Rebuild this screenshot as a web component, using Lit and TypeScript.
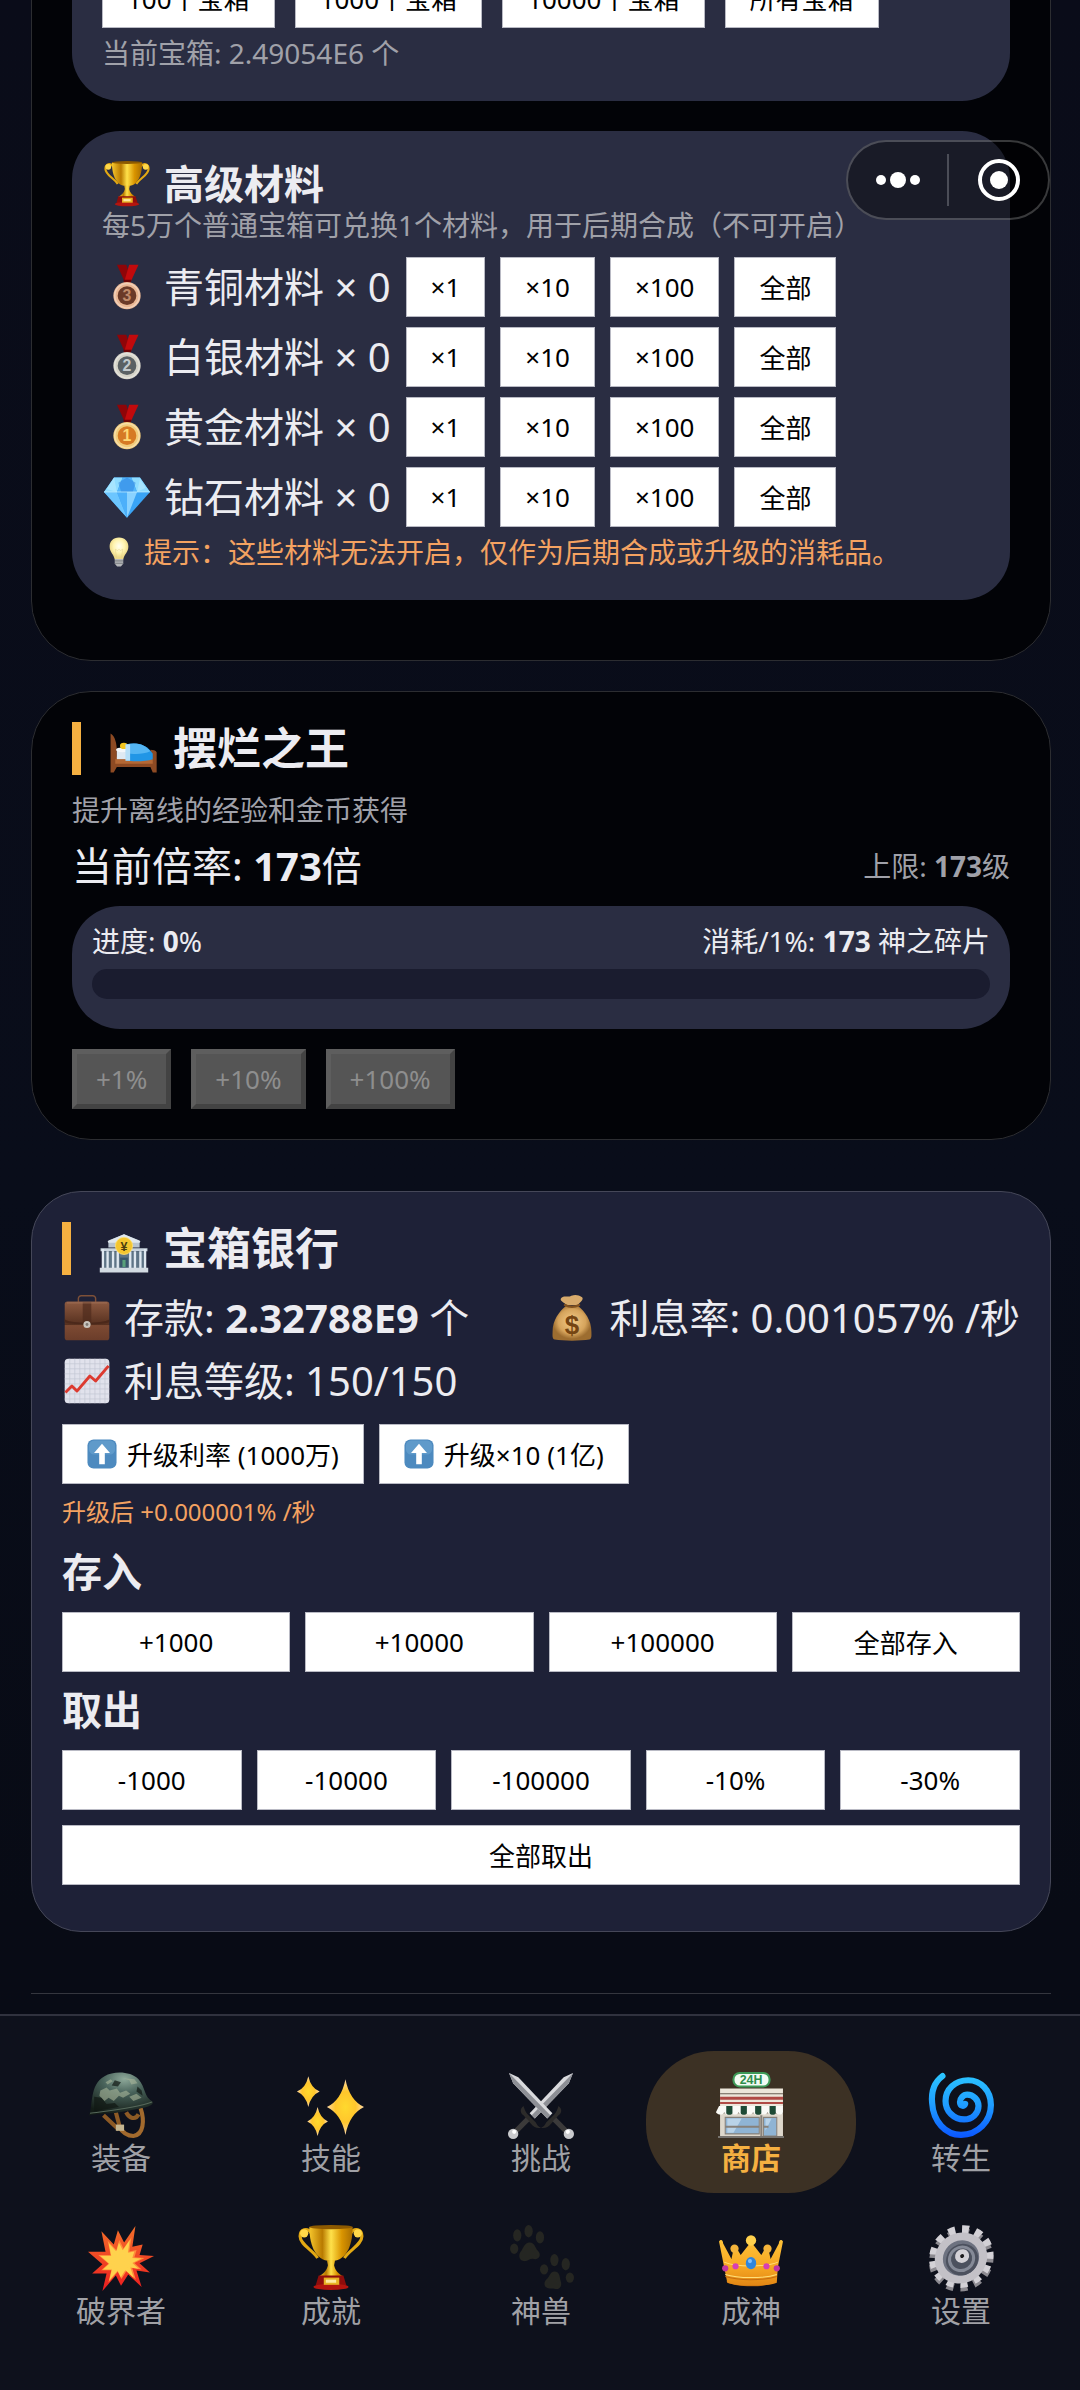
import {LitElement, css, html, svg, nothing, TemplateResult} from 'lit';
import {customElement, property, state} from 'lit/decorators.js';
import {classMap} from 'lit/directives/class-map.js';
import {styleMap} from 'lit/directives/style-map.js';

const star = (x: number, y: number, rx: number, ry: number) => svg`
  <path fill="url(#spark)" d="M${x} ${y - ry} Q${x + rx * 0.22} ${y - ry * 0.25} ${x + rx} ${y} Q${x + rx * 0.22} ${y + ry * 0.25} ${x} ${y + ry} Q${x - rx * 0.22} ${y + ry * 0.25} ${x - rx} ${y} Q${x - rx * 0.22} ${y - ry * 0.25} ${x} ${y - ry}Z"/>`;

const medal = (num: string, rim: string, face: string, ink: string) => svg`
  <path fill="#8e0508" d="M18 1h13l7 21-9 3z"/>
  <path fill="#c20a0c" d="M35 1h13L37 25h-9z"/>
  <path fill="#6d0306" d="M27 22h11l-1 5h-9z"/>
  <circle cx="32" cy="44" r="19" fill=${rim}/>
  <circle cx="32" cy="44" r="17" fill="none" stroke="#fff" stroke-opacity=".35" stroke-width="2"/>
  <circle cx="32" cy="44" r="13" fill=${face}/>
  <text x="32" y="52" text-anchor="middle" font-family="Liberation Sans, sans-serif" font-weight="700" font-size="22" fill=${ink}>${num}</text>`;

const sword = svg`
  <path fill="#d9dadd" d="M1 1l9 4 33 35-5 5L5 11z"/>
  <path fill="#8d8f95" d="M1 1l40 41-3 3L5 11z"/>
  <path fill="#2c2b2a" d="M49 33c4 3 3 7 0 9l-7 8c-3 4-7 5-10 4 3-1 4-3 5-5l8-8c2-2 3-5 4-8z"/>
  <path stroke="#3b3a3a" stroke-width="5" d="M45 46l12 12"/>
  <circle cx="59" cy="60" r="5" fill="#c9cacd"/>
  <circle cx="58" cy="58" r="2" fill="#fff"/>`;

const burst = '46,1 43,21 53,19 50,29 64,30 50,37 60,46 47,44 52,60 39,48 32,59 27,49 14,64 18,47 4,47 14,38 0,26 17,26 13,6 25,19 29,5 35,17';

const ICONS: Record<string, TemplateResult> = {
  trophy: svg`
    <defs>
      <linearGradient id="gold"><stop offset="0" stop-color="#f6c62c"/><stop offset=".3" stop-color="#b97a00"/><stop offset=".5" stop-color="#ffe14a"/><stop offset=".75" stop-color="#d99400"/><stop offset="1" stop-color="#a86d00"/></linearGradient>
    </defs>
    <path fill="none" stroke="#e3a913" stroke-width="3" d="M13 8C9 2 2 4 2 11c0 8 12 13 17 21M51 8c4-6 11-4 11 3 0 8-12 13-17 21"/>
    <circle cx="6" cy="8" r="4" fill="#ffd84a"/><circle cx="58" cy="8" r="4" fill="#ffd84a"/>
    <path fill="url(#gold)" d="M11 2h42c0 14-4 33-21 33S11 16 11 2z"/>
    <ellipse cx="32" cy="2" rx="21" ry="2" fill="#8d5a00"/>
    <path fill="url(#gold)" d="M28 34h8l-1 5c1 5 4 8 9 11H20c5-3 8-6 9-11z"/>
    <path fill="#8f0d0b" d="M20 49h24l3 10H17z"/>
    <ellipse cx="32" cy="60" rx="17" ry="3" fill="#b3150f"/>
    <path fill="#e8b324" d="M25 51h15v7H25z"/>
    <path fill="#ffe9a0" d="M27 53h10v3H27z"/>`,
  bronze: medal('3', '#eab794', '#6b3a28', '#c08a6a'),
  silver: medal('2', '#d5d3c8', '#5b6164', '#c3c9cc'),
  gold: medal('1', '#f2cc7a', '#d67a24', '#ffd873'),
  diamond: svg`
    <path fill="#3aa4f5" d="M14 5h36l14 20-32 36L0 25z"/>
    <path fill="#8fdcff" d="M14 5h12l-8 20H0zM38 5h12l14 20H46z"/>
    <path fill="#55b6fb" d="M26 5h12l8 20H18z"/>
    <path fill="#2b7fe0" d="M20 12l12-7 12 7-4 13H24z" opacity=".5"/>
    <path fill="#6cc6ff" d="M0 25h18l14 36z"/>
    <path fill="#4db0fa" d="M18 25h14v36z"/>
    <path fill="#8ad2ff" d="M32 25h14L32 61z"/>
    <path fill="#b8ebff" d="M4 21L14 5l4 20zM46 25l4-18 8 12z" opacity=".6"/>
    <path fill="none" stroke="#c6efff" stroke-width="1" d="M0 25h64"/>`,
  bulb: svg`
    <defs><radialGradient id="glow" cy=".4"><stop offset="0" stop-color="#fffef0"/><stop offset=".6" stop-color="#fff4b0"/><stop offset="1" stop-color="#ecd98a"/></radialGradient></defs>
    <path fill="url(#glow)" d="M32 1c13 0 20 9 20 19 0 13-9 16-11 28H23C21 36 12 33 12 20 12 10 19 1 32 1z"/>
    <path fill="none" stroke="#e3d08a" stroke-width="1" d="M27 46l-3-20 5 3 3-3 3 3 5-3-3 20"/>
    <path fill="#b5b7ba" d="M23 47h18v10l-5 6h-8l-5-6z"/>
    <path stroke="#74777b" stroke-width="2" d="M23 51h18M23 56h18"/>`,
  bed: svg`
    <path fill="#8d4a23" d="M2 12c6 3 8 14 8 22v8h43V33c3 0 7 1 8 3v26h-5l-3-7H10l-4 7H2z"/>
    <path fill="#b46835" d="M8 45h48v6H8z"/>
    <path fill="#dfe9f2" d="M10 33h16v12H10z"/>
    <ellipse cx="17" cy="33" rx="8" ry="3" fill="#f4f7fa"/>
    <ellipse cx="19" cy="28" rx="5" ry="4" fill="#f2c41d"/>
    <path fill="#2196e6" d="M22 26c14-3 26 0 34 12v7c-8 3-24 3-34 2z"/>
    <path fill="#54b5f3" d="M22 26c14-3 24 0 31 9-9 4-22 4-31 2z"/>
    <path fill="#b7dff7" d="M21 26h6v21h-6z"/>`,
  bank: svg`
    <path fill="#b8c4cf" d="M12 30V21l20-8 20 8v9z"/>
    <path fill="#dfe7ee" d="M11 22l21-9 21 9-1 2H12z"/>
    <path fill="#c9d4de" d="M2 31h60v4H2z"/>
    <path fill="#5e7486" d="M4 35h56v22H4z"/>
    <path stroke="#dfe8f0" stroke-width="3" d="M5 32v26M11 35v22M18 35v22M24 35v22M40 35v22M46 35v22M53 35v22M59 32v26"/>
    <path fill="#39566b" d="M27 43h10v14H27z"/>
    <path fill="#58a07a" d="M30 46h4v9h-4z"/>
    <path fill="#d3dbe2" d="M1 56h62v6H1z"/>
    <circle cx="32" cy="28" r="11" fill="#f3c52f" stroke="#ffe27a" stroke-width="1"/>
    <text x="32" y="34" text-anchor="middle" font-family="Liberation Sans, sans-serif" font-weight="700" font-size="16" fill="#4b3c10">¥</text>`,
  briefcase: svg`
    <defs><linearGradient id="leather" x2="0" y2="1"><stop offset="0" stop-color="#8d5a41"/><stop offset=".6" stop-color="#56301f"/><stop offset=".62" stop-color="#7d4a33"/><stop offset="1" stop-color="#6b3d2a"/></linearGradient></defs>
    <path fill="none" stroke="#7d5038" stroke-width="2" d="M20 10V5c0-2 2-4 4-4h16c2 0 4 2 4 4v5"/>
    <rect x="1" y="9" width="62" height="54" rx="4" fill="url(#leather)"/>
    <path fill="#4b281a" d="M1 34c10 6 52 6 62 0v4c-10 4-52 4-62 0z"/>
    <path fill="#4f2b1d" d="M26 10h12v30H26z" opacity=".7"/>
    <path stroke="#a8785f" stroke-width="1" d="M4 11h56"/>
    <circle cx="32" cy="41" r="5" fill="#c9c4bd"/><circle cx="32" cy="41" r="2" fill="#7d7872"/>`,
  chart: svg`
    <rect x="1" y="1" width="62" height="62" rx="5" fill="#e1e2ec"/>
    <path stroke="#c3c7d4" stroke-width="1" d="M8 1v62M15 1v62M22 1v62M29 1v62M36 1v62M43 1v62M50 1v62M57 1v62M1 8h62M1 15h62M1 22h62M1 29h62M1 36h62M1 43h62M1 50h62M1 57h62"/>
    <path fill="none" stroke="#dc3a30" stroke-width="4" stroke-linejoin="round" d="M2 48l9-9 7 7 18-21 8 7 18-21"/>`,
  moneybag: svg`
    <defs><radialGradient id="sack" cy=".45"><stop offset="0" stop-color="#f3cb88"/><stop offset=".7" stop-color="#d6a45c"/><stop offset="1" stop-color="#9d6d30"/></radialGradient></defs>
    <path fill="#d8ab6c" d="M17 4c5-4 9 0 14-3 6-2 10-1 15 2 3 3-3 7-6 11H25c-4-4-11-6-8-10z"/>
    <path fill="url(#sack)" d="M24 15h16c10 8 19 20 19 36 0 4 1 10-3 11-12 2-36 2-48 0-4-1-3-7-3-11 0-16 9-28 19-36z"/>
    <path stroke="#80511f" stroke-width="3" stroke-linecap="round" d="M22 14c6 3 14 3 20 0" fill="none"/>
    <text x="32" y="54" text-anchor="middle" font-family="Liberation Sans, sans-serif" font-weight="700" font-size="36" fill="#754512">$</text>`,
  up: svg`
    <rect x="1" y="1" width="62" height="62" rx="13" fill="#4d8abf"/>
    <rect x="4" y="3" width="56" height="30" rx="11" fill="#72a9d6" opacity=".5"/>
    <path fill="#fff" d="M32 10l17 20H38v24H26V30H15z"/>`,
  helmet: svg`
    <defs><radialGradient id="dome" cx=".55" cy=".15" r=".85"><stop offset="0" stop-color="#8ea99a"/><stop offset=".4" stop-color="#48625a"/><stop offset="1" stop-color="#131c17"/></radialGradient></defs>
    <path fill="none" stroke="#8d5a25" stroke-width="4" d="M15 42l15 14M27 39l4 15M37 39c3 6 9 8 12 2"/>
    <path fill="none" stroke="#a26a2d" stroke-width="4" d="M51 35c4 12 3 26-7 27-7 0-11-4-14-9"/>
    <path fill="#c5b690" d="M27 51h8v6h-8z"/>
    <path fill="url(#dome)" d="M1 42C5 34 1 12 16 4c9-5 25-5 33 3 7 8 5 17 14 22 0 5-12 6-27 9-14 3-26 2-35 4z"/>
    <path fill="#a9b59a" opacity=".6" d="M12 18l6-3 3 3 7-2 3 4 6-2 4 3-7 4-4-2-5 5-5-3-4 3-5-5zM34 6l6 2 2 4 6-1-3-4zM40 24l7-3 5 4-8 3zM17 10l5-3 2 2-5 3z"/>
    <path fill="#0f1712" opacity=".7" d="M6 24l7 1 5 6 8-1 4 4-24 4zM26 8l6 2-3 4-6-1zM48 14l4 4 1 5-6-4z"/>
    <path fill="none" stroke="#56685a" stroke-width="1" d="M2 40c14-2 45-5 60-11"/>`,
  sparkles: svg`
    <defs><radialGradient id="spark"><stop offset="0" stop-color="#ffd92e"/><stop offset=".55" stop-color="#ffc62c"/><stop offset="1" stop-color="#ffd9a8"/></radialGradient></defs>
    ${star(10, 19, 11, 15)}${star(46, 34, 18, 27)}${star(19, 48, 10, 14)}`,
  swords: svg`<g transform="matrix(-1 0 0 1 64 0)">${sword}</g>${sword}`,
  store: svg`
    <rect x="15" y="1" width="35" height="13" rx="6" fill="#f2fbf4" stroke="#3e9a58" stroke-width="2"/>
    <text x="32" y="12" text-anchor="middle" font-family="Liberation Sans, sans-serif" font-weight="700" font-size="12" fill="#2f8d4b">24H</text>
    <path fill="#ece6da" d="M2 16h61v18H2z"/>
    <path stroke="#6a5f55" stroke-width="1" d="M2 21h61"/>
    <path fill="#b04a45" d="M2 24h61v3H2zM2 29h61v2H2z"/>
    <path fill="#ded8cc" d="M2 40h61v23H2z"/>
    <path fill="#fafaf6" d="M1 33h62v6c0 3-6 3-7 0-1 3-7 3-8 0-1 3-6 3-7 0-1 3-6 3-7 0-1 3-6 3-7 0-1 3-6 3-7 0-1 3-6 3-7 0-1 3-6 3-7 0-1 3-6 3-8 0z"/>
    <path fill="#1e4a35" d="M8 33h6v7c-1 2-5 2-6 0zM22 33h6v7c-1 2-5 2-6 0zM36 33h6v7c-1 2-5 2-6 0zM50 33h6v7c-1 2-5 2-6 0z"/>
    <path fill="#8fb4d4" stroke="#87817a" stroke-width="1" d="M7 44h33v16H7zM44 44h13v18H44z"/>
    <path fill="#b9d3e8" d="M9 45h14l-8 14H9zM46 45h6l-6 12z"/>
    <path stroke="#87817a" stroke-width="2" d="M7 53h33M44 53h5M42 42v21"/>
    <path fill="#77736e" d="M0 62h64v2H0z"/>`,
  spiral: svg`
    <defs><linearGradient id="wave" gradientUnits="userSpaceOnUse" x1="0" y1="0" x2="0" y2="64"><stop offset="0" stop-color="#2cc8ff"/><stop offset=".5" stop-color="#1f9dff"/><stop offset="1" stop-color="#0a55ff"/></linearGradient></defs>
    <path fill="none" stroke="url(#wave)" stroke-width="6" stroke-linecap="round" d="M14 4C6 10 3 19 4 30c1 18 13 31 28 31 16 0 29-13 29-29C61 18 51 8 39 8 26 8 17 17 17 28c0 10 8 18 18 18 8 0 14-6 14-13 0-6-5-11-11-11-4 0-7 4-7 7 0 4 4 5 5 2"/>`,
  boom: svg`
    <defs><linearGradient id="flame" x2="0" y2="1"><stop offset="0" stop-color="#f4702a"/><stop offset="1" stop-color="#ec1c1f"/></linearGradient></defs>
    <polygon fill="url(#flame)" points=${burst}/>
    <polygon fill="#ff8f3a" transform="translate(10 11) scale(.7)" points=${burst}/>
    <polygon fill="#ffd24d" transform="translate(12 14) scale(.62)" points=${burst}/>
    <circle cx="32" cy="34" r="10" fill="#ffd24d"/>`,
  paws: svg`
    <g fill="#252622">
      <ellipse cx="9" cy="10" rx="4" ry="6"/><ellipse cx="20" cy="6" rx="4" ry="6"/><ellipse cx="31" cy="12" rx="4" ry="6"/><ellipse cx="6" cy="23" rx="4" ry="5"/>
      <path d="M20 17c6-1 6 5 9 8 4 4 1 9-4 8-4-1-6 3-10 2-5-1-5-7-2-10 2-3 3-7 7-8z"/>
      <ellipse cx="35" cy="43" rx="4" ry="5"/><ellipse cx="45" cy="34" rx="4" ry="6"/><ellipse cx="56" cy="38" rx="4" ry="6"/><ellipse cx="60" cy="51" rx="4" ry="5"/>
      <path d="M45 45c5 0 5 5 6 9 2 5-1 9-5 8-3-1-5 0-8-1-4-2-3-7 0-9 3-3 3-7 7-7z"/>
    </g>`,
  crown: svg`
    <defs><linearGradient id="crown" x2="0" y2="1"><stop offset="0" stop-color="#ffc53a"/><stop offset=".6" stop-color="#f7a823"/><stop offset="1" stop-color="#e28614"/></linearGradient></defs>
    <path fill="#a85c0c" d="M8 55c10-4 38-4 48 0-10 6-38 6-48 0z"/>
    <path fill="url(#crown)" d="M1 16c2-3 4-1 4 2l8 15 2-9c-4-4 5-7 4 0l3 5 8-10c-5-9 9-9 4 0l8 10 3-5c-1-7 8-4 4 0l2 9 8-15c0-3 2-5 4-2l-5 25-1 15c-10 4-38 4-48 0L6 41z"/>
    <circle cx="32" cy="15" r="5" fill="#ffd14d"/><circle cx="16" cy="23" r="4" fill="#f5b53b"/><circle cx="48" cy="23" r="4" fill="#f5b53b"/>
    <path fill="none" stroke="#ffe07a" stroke-width="1" d="M7 48c12 4 38 4 50 0M6 36c12 5 40 5 52 0"/>
    <path fill="none" stroke="#c56c0f" stroke-width="1" d="M7 50c12 4 38 4 50 0"/>
    <ellipse cx="32" cy="37" rx="5" ry="6" fill="#2f86dd"/><circle cx="31" cy="35" r="2" fill="#7fc1ff"/>
    <circle cx="17" cy="40" r="3" fill="#d63fb4"/><circle cx="47" cy="40" r="3" fill="#d63fb4"/>
    <circle cx="7" cy="42" r="3" fill="#c2359f"/><circle cx="57" cy="42" r="3" fill="#c2359f"/>`,
  gear: svg`
    <g transform="rotate(-35 32 32) translate(32 32) scale(1 .93) translate(-32 -32)">
      <circle cx="31" cy="34" r="28" fill="none" stroke="#8d8b91" stroke-width="8" stroke-dasharray="7 7" pathLength="182"/>
      <circle cx="33" cy="31" r="28" fill="none" stroke="#d3d1d6" stroke-width="8" stroke-dasharray="7 7" pathLength="182"/>
      <circle cx="32" cy="32" r="26" fill="#c3c1c7"/>
      <circle cx="32" cy="32" r="18" fill="#6d7280"/>
      <circle cx="32" cy="34" r="16" fill="#4c515e"/>
      <circle cx="32" cy="33" r="12" fill="none" stroke="#858a97" stroke-width="3"/>
      <circle cx="34" cy="31" r="7" fill="#d4d2d7"/>
      <circle cx="34" cy="31" r="2" fill="#1b1a1c"/>
    </g>`,
};

const MATERIALS = [
  {icon: 'bronze', name: '青铜材料', count: 0},
  {icon: 'silver', name: '白银材料', count: 0},
  {icon: 'gold', name: '黄金材料', count: 0},
  {icon: 'diamond', name: '钻石材料', count: 0},
];

const TABS = [
  {icon: 'helmet', label: '装备'},
  {icon: 'sparkles', label: '技能'},
  {icon: 'swords', label: '挑战'},
  {icon: 'store', label: '商店'},
  {icon: 'spiral', label: '转生'},
  {icon: 'boom', label: '破界者'},
  {icon: 'trophy', label: '成就'},
  {icon: 'paws', label: '神兽'},
  {icon: 'crown', label: '成神'},
  {icon: 'gear', label: '设置'},
];

@customElement('emoji-icon')
export class EmojiIcon extends LitElement {
  @property({type: String}) name = '';

  static styles = css`
    :host {
      display: block;
      flex: none;
      width: 46px;
      height: 46px;
    }

    svg {
      display: block;
      width: 100%;
      height: 100%;
      overflow: visible;
    }
  `;

  render() {
    return html`<svg viewBox="0 0 64 64" aria-hidden="true">${ICONS[this.name]}</svg>`;
  }
}

@customElement('tab-bar')
export class TabBar extends LitElement {
  @state() active = '商店';

  static styles = css`
    :host {
      display: block;
      padding: 35px 14px 44px 16px;
      border-top: 2px solid #30323e;
      background: #0e111c;
    }

    nav {
      display: grid;
      grid-template-columns: repeat(5, 1fr);
      gap: 11px 0;
    }

    .tab {
      display: flex;
      flex-direction: column;
      align-items: center;
      padding: 21px 0 15px;
      border: 0;
      border-radius: 68px;
      background: none;
      color: #a0a1a6;
      font: inherit;
      font-size: 30px;
      line-height: 40px;
    }

    .tab emoji-icon {
      width: 66px;
      height: 66px;
    }

    .tab.active {
      background: #3c3124;
      color: #f5b041;
      font-weight: 700;
    }
  `;

  render() {
    return html`
      <nav>
        ${TABS.map(tab => html`
          <button
            class=${classMap({tab: true, active: tab.label === this.active})}
            aria-current=${tab.label === this.active ? 'page' : nothing}
            @click=${() => { this.active = tab.label; }}
          >
            <emoji-icon name=${tab.icon}></emoji-icon>
            <span>${tab.label}</span>
          </button>
        `)}
      </nav>
    `;
  }
}

@customElement('app-root')
export class AppRoot extends LitElement {
  @state() progress = 0;

  static styles = css`
    :host {
      display: flex;
      flex-direction: column;
      height: 100vh;
      background: linear-gradient(#0a0c19, #090d1a 50%, #080b15 80%);
      color: #ececf1;
      font-family: 'Noto Sans', 'Noto Sans CJK SC', sans-serif;
      font-size: 40px;
    }

    * {
      box-sizing: border-box;
    }

    h2, h3, p {
      margin: 0;
    }

    /* Scrolled to its end: the top of the list runs out of view. */
    main {
      flex: 1;
      min-height: 0;
      display: flex;
      flex-direction: column;
      justify-content: flex-end;
      overflow: hidden;
      padding: 0 29px 20px 31px;
    }

    main > * {
      flex: none;
    }

    .card {
      margin-bottom: 30px;
      padding: 30px 40px;
      border: 1px solid #2c2d31;
      border-radius: 60px;
      background: #020307;
    }

    .card.chests {
      padding-bottom: 60px;
    }

    .card.lazy {
      margin-bottom: 51px;
    }

    .card.bank {
      margin-bottom: 61px;
      padding: 30px 30px 46px;
      border-color: #454758;
      border-radius: 50px;
      background: #1e2137;
    }

    .panel {
      padding: 30px;
      border-radius: 48px;
      background: #2a2d42;
    }

    .panel + .panel {
      margin-top: 30px;
    }

    .title {
      display: flex;
      align-items: center;
      gap: 14px;
      padding-left: 28px;
      border-left: 9px solid #f5b041;
      font-size: 44px;
      line-height: 53px;
    }

    .title emoji-icon {
      width: 50px;
      height: 50px;
    }

    .line {
      display: flex;
      align-items: center;
      gap: 14px;
      padding-left: 2px;
    }

    h3 {
      font-size: 40px;
      line-height: 44px;
    }

    .muted {
      color: #a0a1a9;
      font-size: 28px;
      line-height: 36px;
    }

    .tip {
      gap: 10px;
      margin-top: 7px;
      color: #f4a261;
      font-size: 28px;
      line-height: 36px;
    }

    .tip emoji-icon {
      width: 30px;
      height: 30px;
    }

    .row {
      display: flex;
      gap: 15px;
    }

    .row.wide {
      gap: 20px;
    }

    .panel .muted {
      margin-top: 7px;
    }

    .panel h3 + .muted {
      margin: 0 0 14px;
    }

    .materials {
      display: grid;
      gap: 10px;
    }

    .materials .line {
      line-height: 60px;
    }

    .btn {
      display: flex;
      align-items: center;
      justify-content: center;
      gap: 10px;
      height: 60px;
      padding: 0 24px;
      border: 1px solid #b9bac4;
      border-radius: 0;
      background: #fff;
      color: #000;
      font: inherit;
      font-size: 26px;
      white-space: nowrap;
    }

    .btn emoji-icon {
      width: 30px;
      height: 30px;
    }

    .btn:disabled {
      padding: 0 19px;
      border: 5px solid;
      border-color: #5e5e5e #434343 #434343 #5e5e5e;
      background: #555;
      color: #8e8e8e;
    }

    .lazy .muted {
      margin-top: 17px;
    }

    .split {
      display: flex;
      align-items: center;
      justify-content: space-between;
    }

    .lazy .rate {
      margin-top: 12px;
      line-height: 52px;
    }

    .lazy .rate .muted {
      margin: 0;
    }

    .progress {
      margin: 14px 0 20px;
      padding: 17px 20px 30px;
      font-size: 28px;
      line-height: 36px;
    }

    .track {
      height: 30px;
      margin-top: 10px;
      overflow: hidden;
      border-radius: 15px;
      background: #1a1c2f;
    }

    .fill {
      height: 100%;
      background: #f5b041;
    }

    .stats {
      margin-top: 11px;
      line-height: 63px;
    }

    .bank .row {
      margin-top: 12px;
    }

    .hint {
      margin: 10px 0 16px;
      color: #f4a261;
      font-size: 24px;
      line-height: 36px;
    }

    .bank h3 {
      line-height: 52px;
    }

    .grid {
      display: grid;
      grid-auto-flow: column;
      grid-auto-columns: 1fr;
      gap: 15px;
      margin: 14px 0 12px;
    }

    .grid.withdraw {
      grid-auto-flow: row;
      grid-template-columns: repeat(5, 1fr);
      margin-bottom: 0;
    }

    .btn.full {
      grid-column: 1 / -1;
    }

    hr {
      width: 100%;
      height: 1px;
      margin: 0;
      border: 0;
      background: #34363e;
    }

    /* Floating mini-program menu. */
    .capsule {
      position: fixed;
      top: 140px;
      right: 30px;
      display: flex;
      align-items: center;
      width: 204px;
      height: 80px;
      border: 2px solid rgba(255, 255, 255, 0.22);
      border-radius: 40px;
      background: rgba(0, 0, 0, 0.4);
    }

    .capsule button {
      flex: 1;
      display: flex;
      align-items: center;
      justify-content: center;
      height: 52px;
      padding: 0;
      border: 0;
      background: none;
    }

    .capsule button + button {
      border-left: 2px solid rgba(255, 255, 255, 0.22);
    }

    .capsule svg {
      width: 44px;
      height: 44px;
      fill: #fff;
    }
  `;

  private buttons(labels: string[]) {
    return labels.map(label => html`<button class="btn">${label}</button>`);
  }

  private renderChests() {
    return html`
      <section class="card chests">
        <div class="panel">
          <div class="row wide">${this.buttons(['100个宝箱', '1000个宝箱', '10000个宝箱', '所有宝箱'])}</div>
          <p class="muted">当前宝箱: 2.49054E6 个</p>
        </div>
        <div class="panel">
          <h3 class="line"><emoji-icon name="trophy"></emoji-icon>高级材料</h3>
          <p class="muted">每5万个普通宝箱可兑换1个材料，用于后期合成（不可开启）</p>
          <div class="materials">
            ${MATERIALS.map(item => html`
              <div class="row">
                <span class="line"><emoji-icon name=${item.icon}></emoji-icon>${item.name} × ${item.count}</span>
                ${this.buttons(['×1', '×10', '×100', '全部'])}
              </div>
            `)}
          </div>
          <p class="line tip"><emoji-icon name="bulb"></emoji-icon>提示：这些材料无法开启，仅作为后期合成或升级的消耗品。</p>
        </div>
      </section>
    `;
  }

  private renderLazyKing() {
    return html`
      <section class="card lazy">
        <h2 class="title"><emoji-icon name="bed"></emoji-icon>摆烂之王</h2>
        <p class="muted">提升离线的经验和金币获得</p>
        <div class="split rate">
          <span>当前倍率: <b>173</b>倍</span>
          <span class="muted">上限: <b>173</b>级</span>
        </div>
        <div class="panel progress">
          <div class="split">
            <span>进度: <b>${this.progress}</b>%</span>
            <span>消耗/1%: <b>173</b> 神之碎片</span>
          </div>
          <div class="track" role="progressbar" aria-label="进度" aria-valuenow=${this.progress}>
            <div class="fill" style=${styleMap({width: `${this.progress}%`})}></div>
          </div>
        </div>
        <div class="row wide">
          ${['+1%', '+10%', '+100%'].map(label => html`<button class="btn" disabled>${label}</button>`)}
        </div>
      </section>
    `;
  }

  private renderBank() {
    return html`
      <section class="card bank">
        <h2 class="title"><emoji-icon name="bank"></emoji-icon>宝箱银行</h2>
        <div class="stats">
          <div class="split">
            <span class="line"><emoji-icon name="briefcase"></emoji-icon><span>存款: <b>2.32788E9</b> 个</span></span>
            <span class="line"><emoji-icon name="moneybag"></emoji-icon>利息率: 0.001057% /秒</span>
          </div>
          <span class="line"><emoji-icon name="chart"></emoji-icon>利息等级: 150/150</span>
        </div>
        <div class="row">
          <button class="btn"><emoji-icon name="up"></emoji-icon>升级利率 (1000万)</button>
          <button class="btn"><emoji-icon name="up"></emoji-icon>升级×10 (1亿)</button>
        </div>
        <p class="hint">升级后 +0.000001% /秒</p>
        <h3>存入</h3>
        <div class="grid">${this.buttons(['+1000', '+10000', '+100000', '全部存入'])}</div>
        <h3>取出</h3>
        <div class="grid withdraw">
          ${this.buttons(['-1000', '-10000', '-100000', '-10%', '-30%'])}
          <button class="btn full">全部取出</button>
        </div>
      </section>
    `;
  }

  render() {
    return html`
      <main>
        ${this.renderChests()}
        ${this.renderLazyKing()}
        ${this.renderBank()}
        <hr>
      </main>
      <tab-bar></tab-bar>
      <div class="capsule">
        <button aria-label="更多">
          <svg viewBox="0 0 44 44"><circle cx="5" cy="22" r="5"/><circle cx="22" cy="22" r="8"/><circle cx="39" cy="22" r="5"/></svg>
        </button>
        <button aria-label="关闭">
          <svg viewBox="0 0 44 44"><circle cx="22" cy="22" r="19" fill="none" stroke="#fff" stroke-width="4"/><circle cx="22" cy="22" r="9"/></svg>
        </button>
      </div>
    `;
  }
}
